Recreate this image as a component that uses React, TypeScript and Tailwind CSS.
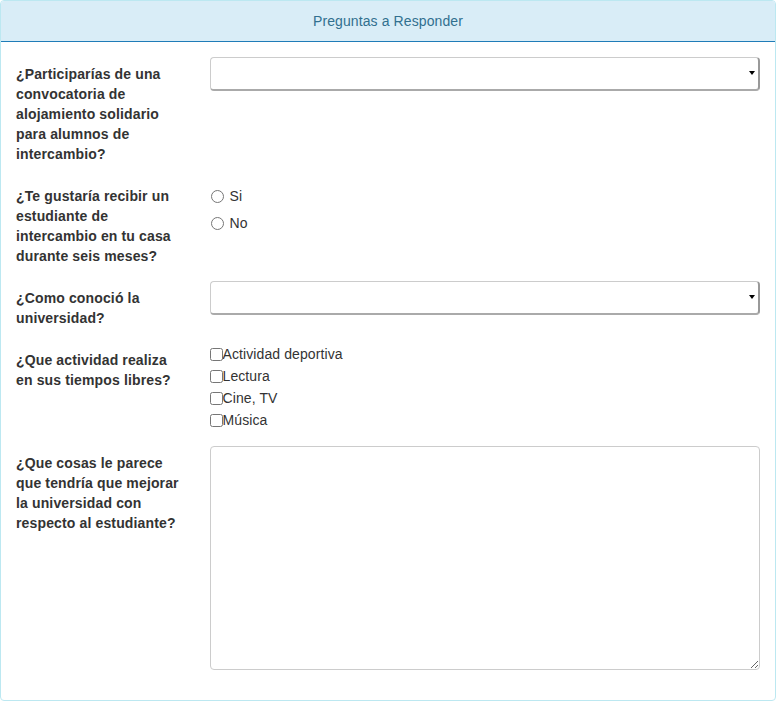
import React from "react";

const font = { fontFamily: '"Liberation Sans", Arial, sans-serif' };

function FakeSelect() {
  return (
    <div className="relative h-[34px] w-full rounded-[4px] border border-[#ccc] border-r-[#999] border-b-[#aaa] border-r-2 border-b-2 bg-white">
      <span className="absolute right-[3px] top-[13px] h-0 w-0 border-x-[3px] border-t-[4px] border-x-transparent border-t-black" />
    </div>
  );
}

function Label({ children }: { children: React.ReactNode }) {
  return (
    <label className="block w-[193.5px] shrink-0 px-[15px] pt-[7px] text-[14px] font-bold leading-[20px] tracking-[0.14px] text-[#333]">
      {children}
    </label>
  );
}

export default function App() {
  const activities = ["Actividad deportiva", "Lectura", "Cine, TV", "Música"];
  return (
    <div style={font} className="w-[776px] bg-white text-[14px] tracking-[0.1px] text-[#333]">
      <div className="h-[701px] rounded-[4px] border border-[#bce8f1] bg-white">
        <div className="rounded-t-[3px] border-b border-[#1f7cb8] bg-[#d9edf7] px-[15px] py-[10px] text-center leading-[20px] text-[#31708f]">
          Preguntas a Responder
        </div>
        <div className="px-0 py-[15px]">
          <div className="mb-[15px] flex">
            <Label>¿Participarías de una convocatoria de alojamiento solidario para alumnos de intercambio?</Label>
            <div className="flex-1 px-[15px]">
              <FakeSelect />
            </div>
          </div>

          <div className="mb-[15px] flex">
            <Label>¿Te gustaría recibir un estudiante de intercambio en tu casa durante seis meses?</Label>
            <div className="flex-1 px-[15px] pt-[7px]">
              <label className="relative flex h-[20px] items-center leading-[20px]">
                <input type="radio" name="r" className="m-0 ml-[1px] h-[13px] w-[13px]" />
                <span className="ml-[6px]">Si</span>
              </label>
              <label className="relative mt-[7px] flex h-[20px] items-center leading-[20px]">
                <input type="radio" name="r" className="m-0 ml-[1px] h-[13px] w-[13px]" />
                <span className="ml-[6px]">No</span>
              </label>
            </div>
          </div>

          <div className="mb-[15px] flex">
            <Label>¿Como conoció la universidad?</Label>
            <div className="flex-1 px-[15px]">
              <FakeSelect />
            </div>
          </div>

          <div className="mb-[15px] flex">
            <Label>¿Que actividad realiza en sus tiempos libres?</Label>
            <div className="flex-1 px-[15px]">
              {activities.map((a) => (
                <label key={a} className="flex h-[22px] items-center leading-[22px]">
                  <input type="checkbox" className="m-0 h-[13px] w-[13px]" />
                  <span>{a}</span>
                </label>
              ))}
            </div>
          </div>

          <div className="mb-[15px] flex">
            <Label>¿Que cosas le parece que tendría que mejorar la universidad con respecto al estudiante?</Label>
            <div className="flex-1 px-[15px]">
              <textarea className="block h-[224px] w-full rounded-[4px] border border-[#ccc] bg-white" />
            </div>
          </div>
        </div>
      </div>
    </div>
  );
}
